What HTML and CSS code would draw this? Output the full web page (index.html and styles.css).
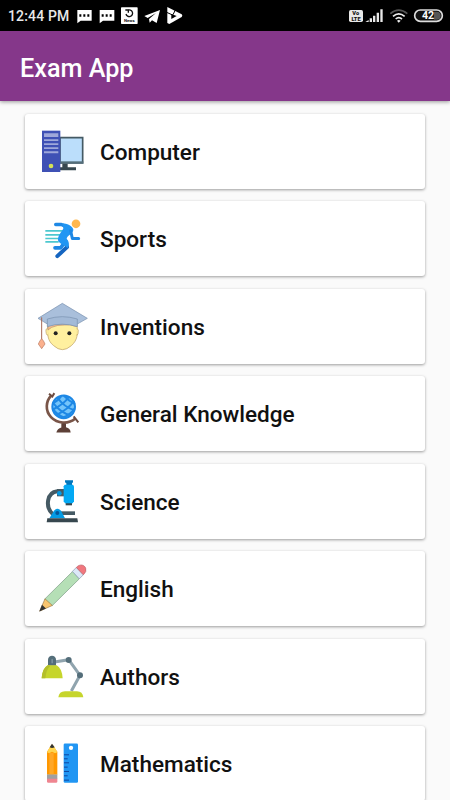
FILE: index.html
```html
<!DOCTYPE html>
<html lang="en">
<head>
<meta charset="utf-8">
<meta name="viewport" content="width=device-width, initial-scale=1">
<title>Exam App</title>
<link rel="stylesheet" href="styles.css">
</head>
<body>
<div class="status-bar">
  <span class="clock">12:44 PM</span>
  <svg class="notifications" viewBox="225 0 330 93" fill="#fff">
    <path d="M232 30H275V62H242L232 70ZM238 43v7h6v-7zM250 43v7h6v-7zM262 43v7h6v-7z" fill-rule="evenodd"/>
    <path d="M299 30H343V62H309L299 70ZM305 43v7h6v-7zM317 43v7h6v-7zM329 43v7h6v-7z" fill-rule="evenodd"/>
    <rect x="363" y="22" width="50" height="50" rx="2"/>
    <path d="M383 31A10 10 0 1 1 378 42M376 30h9v8" fill="none" stroke="#111" stroke-width="4"/>
    <text class="news" x="388" y="67" text-anchor="middle">News</text>
    <path d="M433 48L480 30L470 69L456 61L449 68L447 57L468 39L443 54Z"/>
    <path d="M502 21L545 43Q549 47 545 51L508 72L502 69Z"/>
    <path d="M514 42L530 48L514 57Z" fill="#000"/>
    <path d="M500 37L520 46M526 30L519 44" stroke="#000" stroke-width="3"/>
  </svg>
  <svg class="system" viewBox="135 0 315 93">
    <rect x="147" y="30" width="42" height="36" rx="5" fill="#e8e8e8"/>
    <text class="lte" x="167" y="46" text-anchor="middle">Vo</text>
    <text class="lte" x="168" y="62" text-anchor="middle">LTE</text>
    <path d="M196 66L206 60V66ZM209 55h7v11h-7zM219 47h7v19h-7zM230 38h7v28h-7zM241 28h7v38h-7z" fill="#e8e8e8"/>
    <g fill="none" stroke-width="5">
      <path d="M271 41Q296 20 322 41" stroke="#555"/>
      <path d="M279 49Q296 34 314 49" stroke="#eee"/>
      <path d="M287 57Q296 49 306 57" stroke="#eee"/>
    </g>
    <path d="M291 62Q296 58 302 62L296 68Z" fill="#eee"/>
    <rect x="344" y="30" width="83" height="34" rx="17" fill="#111" stroke="#ddd" stroke-width="5"/>
    <path d="M402 35h8q12 0 12 12t-12 12h-8z" fill="#555"/>
    <text class="battery" x="384" y="58" text-anchor="middle">42</text>
  </svg>
</div>
<header class="app-bar"><h1>Exam App</h1></header>
<main class="list">
  <div class="card">
    <svg class="icon" viewBox="45 17 165 225">
      <path d="M120 88H188V164H120Z" fill="#bbdefb" stroke="#455a64" stroke-width="5"/>
      <path d="M118 159H190V166H118Z" fill="#546e7a"/>
      <path d="M127 166H143V177H168V186H120V177H127Z" fill="#37474f"/>
      <path d="M66 67H121V191H66Z" fill="#3f51b5"/>
      <path d="M72 75H115V86H72ZM72 93H115V98H72ZM72 105H115V110H72ZM72 117H115V122H72ZM72 129H115V135H72Z" fill="#9fa8da"/>
      <circle cx="93" cy="173" r="7" fill="#d4e157"/>
    </svg>
    <span class="label">Computer</span>
  </div>
  <div class="card">
    <svg class="icon" viewBox="45 18.6 165 225" fill="none" stroke-linecap="round" stroke-linejoin="round">
      <path d="M76 108H130M76 120H122M76 131H116M76 141H116" stroke="#4dc8cf" stroke-width="5" stroke-linecap="butt"/>
      <path d="M136 138L141 157L112 184" stroke="#1565c0" stroke-width="12"/>
      <path d="M105 159H122L132 146" stroke="#1e88e5" stroke-width="11"/>
      <path d="M107 89H124L142 97" stroke="#1e88e5" stroke-width="10"/>
      <path d="M127 85C140 86 158 92 160 104C161 116 140 122 140 132C148 141 149 152 142 160C137 151 121 148 115 139C110 127 124 112 130 101Z" fill="#2196f3"/>
      <path d="M152 108L157 131H176" stroke="#1e88e5" stroke-width="9"/>
      <circle cx="168" cy="87" r="13" fill="#ffb74d"/>
    </svg>
    <span class="label">Sports</span>
  </div>
  <div class="card">
    <svg class="icon" viewBox="45 11 165 225" stroke-width="2" stroke-linejoin="round">
      <path d="M83 118C82 148 82 166 101 181Q127 205 154 181C173 164 174 146 171 118Q127 105 83 118Z" fill="#fff09f" stroke="#b99b62"/>
      <path d="M83 129Q75 130 79 145Q81 151 84 149M171 129Q177 132 174 145Q172 151 169 149" fill="#fff09f" stroke="#b99b62"/>
      <path d="M84 118Q127 107 170 118V124Q150 116 134 119Q112 118 95 126L84 134Z" fill="#f9bf8b" stroke="#b78b70"/>
      <path d="M54 99L127 54L202 99L172 116H82Z" fill="#a9bfdb" stroke="#7790ad"/>
      <path d="M82 101Q127 87 172 101V124Q127 109 82 124Z" fill="#a3bad7" stroke="#7790ad"/>
      <path d="M65 96V163" fill="none" stroke="#a66a56" stroke-width="3"/>
      <path d="M65 160Q59 166 55 176L65 190L75 176Q71 166 65 160Z" fill="#fbb18e" stroke="#b8775f"/>
      <circle cx="107" cy="144" r="6" fill="#222"/><circle cx="148" cy="144" r="6" fill="#222"/>
    </svg>
    <span class="label">Inventions</span>
  </div>
  <div class="card">
    <svg class="icon" viewBox="45 18.6 165 225">
      <path d="M94 77C77 94 75 123 93 142C112 162 145 164 166 146" fill="none" stroke="#795548" stroke-width="8"/>
      <path d="M87 72L97 80L103 70M161 140L175 158" fill="none" stroke="#6d4c41" stroke-width="6"/>
      <path d="M124 161H138V172Q151 175 152 188H109Q112 176 124 173Z" fill="#5d4037"/>
      <circle cx="131" cy="111" r="34" fill="#74c4fa" stroke="#1e88e5" stroke-width="6"/>
      <g fill="none" stroke="#1e88e5" stroke-width="6">
        <path d="M99 118Q112 136 133 144M99 99Q122 129 153 137M112 83Q133 113 164 121M131 77Q147 94 165 103"/>
        <path d="M99 101Q115 92 124 79M98 119Q132 104 147 80M108 136Q145 119 162 93M126 144Q150 136 164 116"/>
      </g>
    </svg>
    <span class="label">General Knowledge</span>
  </div>
  <div class="card">
    <svg class="icon" viewBox="45 11 165 225">
      <path d="M133 93H112C81 96 74 140 99 162" fill="none" stroke="#455a64" stroke-width="12"/>
      <path d="M111 86H133V108H111Z" fill="#455a64"/><circle cx="118" cy="99" r="7" fill="#039be5"/>
      <path d="M135 60H159V66L156 69V76H139V69L135 66Z" fill="#0277bd"/>
      <path d="M137 127H156V135H137Z" fill="#37474f"/>
      <path d="M134 73H159L162 78V123L158 129H135L131 123V78Z" fill="#03a9f4"/>
      <path d="M120 153H165V164H120Z" fill="#455a64"/>
      <path d="M88 174L102 151Q112 140 123 151L135 174Z" fill="#039be5"/>
      <circle cx="112" cy="158" r="6" fill="#01579b"/>
      <path d="M82 174H172L174 186H80Z" fill="#37474f"/>
    </svg>
    <span class="label">Science</span>
  </div>
  <div class="card">
    <svg class="icon" viewBox="45 18.6 165 225" stroke-width="2" stroke-linejoin="round">
      <path d="M74 163L158 80L178 102L96 183Z" fill="#b5dfb6" stroke="#75997f"/>
      <path d="M75 162L97 182L59 199Z" fill="#f9c56f" stroke="#987849"/>
      <path d="M66 180L78 191L58 200Z" fill="#333"/>
      <path d="M157 80L169 68L190 90L178 102Z" fill="#dce8f7" stroke="#8495ae"/>
      <path d="M169 68C180 56 193 60 197 70Q201 80 190 90Z" fill="#f1777e" stroke="#b9656c"/>
    </svg>
    <span class="label">English</span>
  </div>
  <div class="card">
    <svg class="icon" viewBox="45 11 165 225">
      <path d="M99 81L146 73L180 120L154 167" fill="none" stroke="#90a4ae" stroke-width="9"/>
      <path d="M84 91V73C84 57 108 57 108 73V91Z" fill="#546e7a"/><path d="M94 84V72q3-4 5 0v12z" fill="#78909c"/>
      <path d="M65 129Q67 99 83 90H110Q126 99 128 129Z" fill="#c6d52c"/><path d="M76 129Q78 103 91 91L83 90Q67 99 65 129Z" fill="#b4bf2b"/>
      <circle cx="146" cy="74" r="9" fill="#546e7a"/><circle cx="180" cy="120" r="9" fill="#546e7a"/>
      <path d="M115 186Q117 168 135 168H171Q188 168 190 186Z" fill="#c6d52c"/>
    </svg>
    <span class="label">Authors</span>
  </div>
  <div class="card">
    <svg class="icon" viewBox="45 18.6 165 225">
      <path d="M81 96L96 73L112 96V165H81Z" fill="#ff9800"/>
      <path d="M81 97L92 78H101L112 97L105 100L96 96L88 100Z" fill="#ffd54f"/>
      <path d="M89 82L96 72L104 82Q96 87 89 82Z" fill="#333"/>
      <path d="M88 99H101V165H88Z" fill="#ffa726"/>
      <path d="M81 164H112V178H81Z" fill="#a0a0a0"/><path d="M81 177H112V185Q112 189 108 189H85Q81 189 81 185Z" fill="#ef8590"/>
      <rect x="131" y="71" width="43" height="118" rx="4" fill="#2196f3"/>
      <circle cx="153" cy="84" r="6.5" fill="#fff"/>
      <path d="M132 105H147M132 117H143M132 129H147M132 142H143M132 155H147M132 168H143M132 181H147" stroke="#0d47a1" stroke-width="3"/>
    </svg>
    <span class="label">Mathematics</span>
  </div>
</main>
</body>
</html>
```
FILE: styles.css
```css
* { box-sizing: border-box; }
html, body { height: 100%; }
body {
  margin: 0;
  display: flex;
  flex-direction: column;
  overflow: hidden;
  background: #fafafa;
  color: #111;
  font-family: Roboto, "Liberation Sans", sans-serif;
  font-weight: 500;
}
.status-bar {
  flex: none;
  height: 31px;
  padding-left: 8px;
  display: flex;
  align-items: center;
  background: #000;
  color: #e8e8e8;
}
.clock { width: 67px; font-size: 14px; letter-spacing: .15px; line-height: 31px; white-space: nowrap; padding-top: 1px; }
.notifications { width: 110px; height: 31px; }
.system { width: 105px; height: 31px; margin-left: auto; }
.news { font-size: 13px; font-weight: 700; fill: #111; }
.lte { font-size: 17px; font-weight: 900; fill: #111; }
.battery { font-size: 32px; font-weight: 700; fill: #fff; }
.app-bar {
  flex: none;
  height: 70px;
  padding-left: 20px;
  display: flex;
  align-items: center;
  background: #85378a;
  box-shadow: 0 1px 4px rgba(0, 0, 0, .4);
}
.app-bar h1 { margin: 5px 0 0; color: #fff; font-size: 25.2px; font-weight: 500; line-height: 30px; }
.list { padding: 12.7px 25px 0; display: flex; flex-direction: column; gap: 12.5px; }
.card {
  flex: none;
  height: 75px;
  padding-left: 10px;
  display: flex;
  align-items: center;
  gap: 10px;
  background: #fff;
  border-radius: 3px;
  box-shadow: 0 1px 3px rgba(0, 0, 0, .38);
}
.icon { width: 55px; height: 75px; flex: none; }
.label { font-size: 22.55px; line-height: 28px; padding-top: 3.6px; white-space: nowrap; }
```
